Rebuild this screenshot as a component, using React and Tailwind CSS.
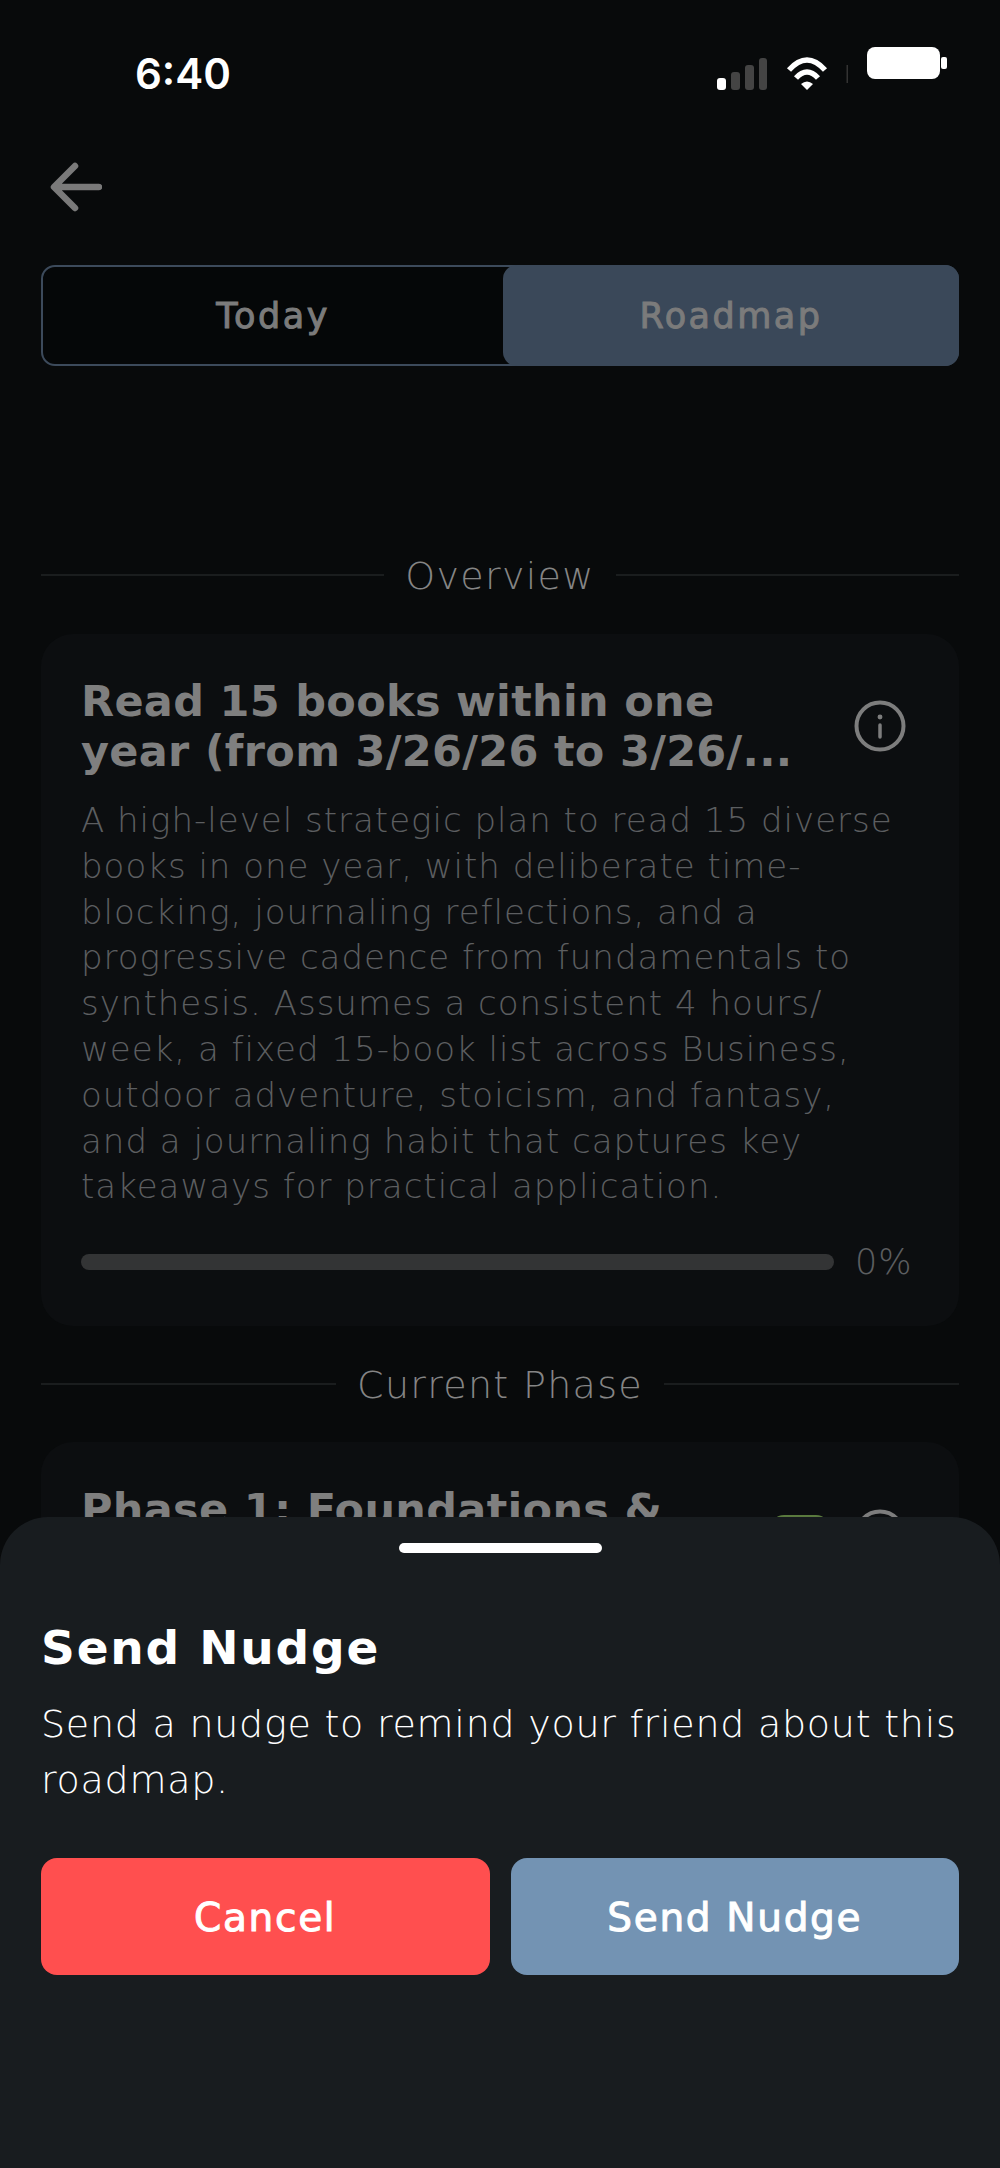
import React from 'react'

const descLines = [
  'A high-level strategic plan to read 15 diverse',
  'books in one year, with deliberate time-',
  'blocking, journaling reflections, and a',
  'progressive cadence from fundamentals to',
  'synthesis. Assumes a consistent 4 hours/',
  'week, a fixed 15-book list across Business,',
  'outdoor adventure, stoicism, and fantasy,',
  'and a journaling habit that captures key',
  'takeaways for practical application.',
]

function StatusIcons() {
  return (
    <svg className="block" width="230" height="43" viewBox="0 0 230 43" fill="none">
      <rect x="0" y="31" width="9" height="12" rx="3" fill="#fff" />
      <rect x="14" y="25" width="9" height="18" rx="3" fill="#444" />
      <rect x="28" y="18" width="9" height="25" rx="3" fill="#444" />
      <rect x="42" y="11" width="8" height="32" rx="3" fill="#444" />
      <path d="M72 23 Q90 3 108 23" stroke="#fff" strokeWidth="5.5" />
      <path d="M79 31 Q90 19 101 31" stroke="#fff" strokeWidth="5.5" />
      <path d="M84 37 Q90 32 96 37 L90 43 Z" fill="#fff" />
      <rect x="129.5" y="18" width="1.5" height="18" fill="#333" />
      <rect x="150" y="0" width="73" height="32" rx="8" fill="#fff" />
      <rect x="224" y="10" width="6" height="12" rx="2" fill="#fff" />
    </svg>
  )
}

function InfoIcon() {
  return (
    <svg className="block" width="52" height="52" viewBox="0 0 52 52" fill="none" stroke="#7d7d7d" strokeWidth="4">
      <circle cx="26" cy="26" r="23.5" />
      <path d="M26 25v12" strokeWidth="3.5" strokeLinecap="round" />
      <circle cx="26" cy="17" r="1.2" strokeWidth="2.5" />
    </svg>
  )
}

function SectionHeading({ label }) {
  return (
    <div className="flex items-center gap-[21px]">
      <div className="h-[2px] flex-1 bg-[#1a1d1e]" />
      <span className="pt-[2px] text-[38px] leading-[46px] font-extralight tracking-[1.3px] text-[#858585]">{label}</span>
      <div className="h-[2px] flex-1 bg-[#1a1d1e]" />
    </div>
  )
}

export default function App() {
  return (
    <div className="relative h-[2168px] w-[1000px] overflow-hidden bg-[#080a0b] font-['DejaVu_Sans',sans-serif]">
      <div className="flex items-start justify-between pl-[135px] pr-[53px] pt-[47px]">
        <span className="mt-[5px] font-['Inter',sans-serif] text-[42px] leading-[44px] font-semibold text-white">6:40</span>
        <StatusIcons />
      </div>

      <div className="px-[41px]">
        <div className="mt-[66px] ml-[9px]">
          <svg className="block" width="52" height="50" viewBox="0 0 52 50" fill="none" stroke="#7a7a7a" strokeWidth="6.5" strokeLinecap="round" strokeLinejoin="round">
            <path d="M49 25H6M25 4L4 25l21 21" />
          </svg>
        </div>

        <div className="mt-[53px] flex h-[101px] rounded-[14px] border-2 border-[#3c4a5b] bg-[#050708]">
          <div className="flex flex-1 items-center justify-center pt-[2px] text-[35px] tracking-[2.5px] text-[#7b7b7b] [-webkit-text-stroke:1px_#7b7b7b]">Today</div>
          <div className="-my-[2px] -mr-[2px] flex w-[456px] items-center justify-center rounded-[14px] bg-[#3a4859] pt-[2px] text-[35px] tracking-[2.5px] text-[#7b7b7b] [-webkit-text-stroke:1px_#7b7b7b]">Roadmap</div>
        </div>

        <div className="mt-[185px]">
          <SectionHeading label="Overview" />
        </div>

        <div className="mt-[35px] h-[692px] rounded-[32px] bg-[#0c0e10] px-[40px] pt-[42px]">
          <div className="flex items-center justify-between">
            <h2 className="whitespace-nowrap text-[43px] leading-[50px] font-bold tracking-[0.3px] text-[#7f7f7f]">
              Read 15 books within one<br />year (from 3/26/26 to 3/26/...
            </h2>
            <div className="mr-[13px]"><InfoIcon /></div>
          </div>
          <div className="mt-[22px] text-[34px] leading-[45.8px] font-extralight tracking-[1px] text-[#5c5e60]">
            {descLines.map(l => (
              <div key={l} className="whitespace-nowrap">{l}</div>
            ))}
          </div>
          <div className="mt-[32px] flex items-center gap-[21px]">
            <div className="h-[16px] w-[753px] rounded-full bg-[#333435]" />
            <span className="text-[35px] leading-[40px] font-extralight tracking-[1px] text-[#5c5e60]">0%</span>
          </div>
        </div>

        <div className="mt-[34px]">
          <SectionHeading label="Current Phase" />
        </div>

        <div className="mt-[34px] h-[300px] rounded-[32px] bg-[#0c0e10] px-[40px] pt-[42px]">
          <div className="flex items-start justify-between">
            <h2 className="whitespace-nowrap text-[43px] leading-[50px] font-bold tracking-[0.3px] text-[#7f7f7f]">Phase 1: Foundations &amp;</h2>
            <div className="mt-[25px] mr-[13px] flex items-start gap-[24px]">
              <div className="mt-[6px] h-[40px] w-[60px] rounded-[14px] bg-[#5a7a3e]" />
              <InfoIcon />
            </div>
          </div>
        </div>
      </div>

      <div className="absolute inset-x-0 bottom-0 h-[651px] rounded-t-[48px] bg-[#181c1f] px-[41px]">
        <div className="mx-auto mt-[26px] h-[10px] w-[203px] rounded-full bg-white" />
        <h3 className="mt-[67px] text-[47px] leading-[56px] font-bold tracking-[1.8px] text-white">Send Nudge</h3>
        <p className="mt-[20px] whitespace-nowrap text-[38px] leading-[56px] font-extralight tracking-[0.75px] text-white">
          Send a nudge to remind your friend about this<br />roadmap.
        </p>
        <div className="mt-[50px] flex gap-[21px]">
          <button className="h-[117px] flex-1 rounded-[16px] bg-[#ff4f4f] pt-[3px] text-[39px] tracking-[1.7px] text-white [-webkit-text-stroke:1px_#fff]">Cancel</button>
          <button className="h-[117px] flex-1 rounded-[16px] bg-[#7393b3] pt-[3px] text-[39px] tracking-[1.7px] text-white [-webkit-text-stroke:1px_#fff]">Send Nudge</button>
        </div>
      </div>
    </div>
  )
}
